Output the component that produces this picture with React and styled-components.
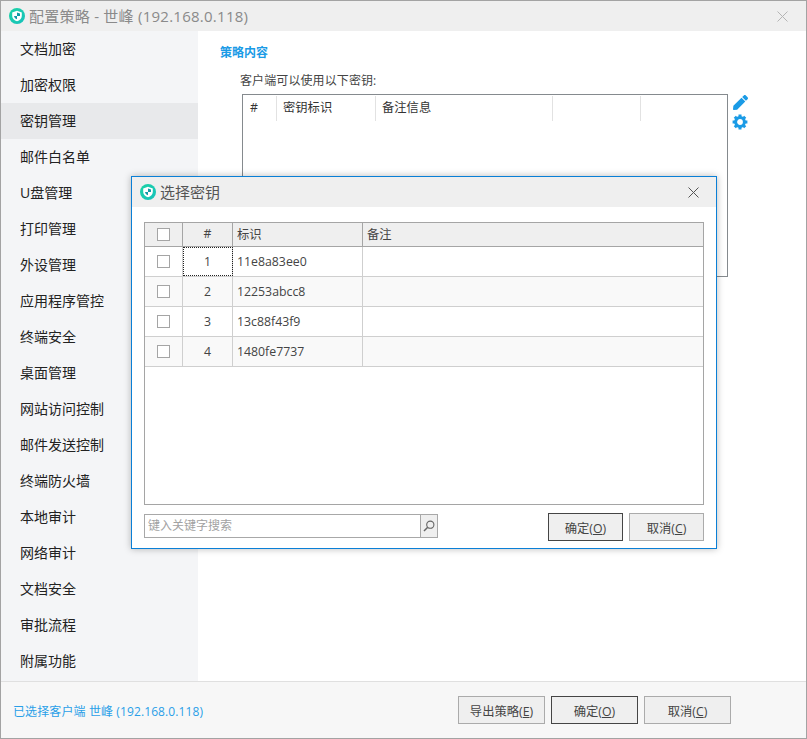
import React from "react";
import styled, { createGlobalStyle } from "styled-components";
import { FaPen } from "react-icons/fa";

const Global = createGlobalStyle`
  html, body { margin: 0; padding: 0; background: #fff; }
  * { box-sizing: border-box; }
  body { font-family: "Open Sans", "Noto Sans CJK SC", sans-serif; font-size: 13px; color: #333; }
`;

const Win = styled.div`
  position: relative; width: 807px; height: 739px; border: 1px solid #a3a3a3;
  display: flex; flex-direction: column; background: #fff; overflow: hidden;
`;
const TitleBar = styled.div`
  height: 30px; flex: none; background: #efefef; display: flex; align-items: center;
  padding: 0 ${p => p.$pr}px 0 8px; gap: 4px; font-size: 15px; letter-spacing: ${p => p.$ls}px; color: ${p => p.$c};
`;
const TitleText = styled.span`flex: 1; white-space: nowrap; line-height: 20px; padding-bottom: 1px;`;
const Body = styled.div`flex: 1; display: flex; min-height: 0;`;
const Sidebar = styled.div`width: 197px; flex: none; background: #f4f5f7; display: flex; flex-direction: column;`;
const NavItem = styled.div`
  height: 36px; flex: none; padding: 0 0 2px 19px; display: flex; align-items: center; font-size: 14px; color: #222;
  background: ${p => (p.$active ? "#e8e9eb" : "transparent")};
`;
const Content = styled.div`flex: 1; padding: 13px 0 0 22px; display: flex; flex-direction: column; align-items: flex-start;`;
const Heading = styled.div`font-size: 12px; font-weight: 700; color: #1a9be6; line-height: 18px;`;
const Label = styled.div`margin: 10px 0 0 20px; font-size: 12px; letter-spacing: .1px; color: #444; line-height: 18px;`;
const KeyRow = styled.div`display: flex; margin: 4px 0 0 22px; gap: 4px;`;
const KeyBox = styled.div`width: 486px; height: 183px; border: 1px solid #858a8e;`;
const KeyHead = styled.div`display: grid; grid-template-columns: 34px 99px 177px 88px; height: 25px; margin-top: 1px;`;
const KeyHeadCell = styled.div`
  border-right: 1px solid #e2e2e2; padding-left: ${p => p.$pl}px; font-size: 12.3px; color: #333; line-height: 24px;
`;
const Tools = styled.div`display: flex; flex-direction: column; gap: 4px; color: #1a9be6; padding-top: 1px; svg { display: block; }`;
const PenWrap = styled.div`padding-left: 1px;`;

const Footer = styled.div`
  height: 57px; flex: none; border-top: 1px solid #e0e0e0; background: #f7f7f7;
  display: flex; align-items: center; padding: 0 75px 0 12px; gap: 6px;
`;
const Selected = styled.div`flex: 1; color: #2a9fe8; font-size: 12px; letter-spacing: .11px; padding-top: 1px;`;
const Btn = styled.button`
  width: ${p => p.$w}px; height: 28px; flex: none; border: 1px solid ${p => (p.$primary ? "#454545" : "#ababab")};
  background: #efefef; color: #444; font: 12.3px "Open Sans", "Noto Sans CJK SC", sans-serif; padding: 1px 0 0;
  u { text-decoration: underline; }
`;

const Dialog = styled.div`
  position: absolute; left: 130px; top: 175px; width: 586px; height: 373px; background: #fff;
  border: 1px solid #0a7fd6; box-shadow: 0 0 7px rgba(0,0,0,.28); display: flex; flex-direction: column;
`;
const Close = styled.svg`flex: none; display: block;`;
const DialogBody = styled.div`flex: 1; padding: 15px 12px 0 12px; display: flex; flex-direction: column;`;
const Table = styled.div`height: 283px; flex: none; border: 1px solid #a5a5a5; display: flex; flex-direction: column;`;
const Row = styled.div`
  display: grid; grid-template-columns: 38px 50px 130px 1fr; flex: none; height: ${p => p.$h}px;
  border-bottom: 1px solid ${p => (p.$head ? "#a5a5a5" : "#cfcfcf")};
  background: ${p => (p.$head ? "#efefef" : p.$alt ? "#f9f9f9" : "#fff")};
`;
const Cell = styled.div`
  border-right: 1px solid ${p => (p.$head ? "#a5a5a5" : "#cfcfcf")}; display: flex; align-items: center;
  justify-content: ${p => (p.$center ? "center" : "flex-start")};
  padding: 0 0 ${p => (p.$box ? 0 : p.$head ? 2 : 1)}px ${p => (p.$center ? 0 : 4)}px; font-size: 12.3px; color: #444;
  &:last-child { border-right: 0; }
  outline: ${p => (p.$focus ? "1px dotted #222" : "none")}; outline-offset: -1px;
`;
const Check = styled.span`width: 13px; height: 13px; border: 1px solid #a5a5a5; background: #fff; display: block;`;
const Bottom = styled.div`display: flex; align-items: center; margin-top: 8px; gap: 6px;`;
const SearchBox = styled.div`
  width: 294px; height: 24px; flex: none; border: 1px solid #a8a8a8; display: flex; margin: 0 104px 2px 0; background: #fff;
`;
const SearchInput = styled.div`flex: 1; padding-left: 3px; font-size: 12px; color: #a2a2a2; line-height: 22px;`;
const SearchBtn = styled.div`
  width: 17px; border-left: 1px solid #a8a8a8; background: #efefef; display: flex; align-items: center; justify-content: center;
`;

const Logo = () => (
  <svg width="16" height="16" viewBox="0 0 16 16" style={{ flex: "none" }}>
    <defs>
      <linearGradient id="lg" x1="0" y1="0" x2="1" y2="1">
        <stop offset="0" stopColor="#1bd3a4" />
        <stop offset="1" stopColor="#17c1bd" />
      </linearGradient>
    </defs>
    <circle cx="8" cy="8" r="8" fill="url(#lg)" />
    <path d="M8 2.8 12.8 4.4V8c0 2.6-2 4.3-4.8 5.3C5.2 12.3 3.2 10.6 3.2 8V4.4Z" fill="#fff" />
    <path d="M8 4.6 11 5.6V8H8ZM8 8H5c.2 1.5 1.3 2.6 3 3.3Z" fill="#129aa6" />
  </svg>
);
const Gear = () => (
  <svg width="16" height="16" viewBox="0 0 16 16">
    <circle cx="8" cy="8" r="4.4" fill="none" stroke="currentColor" strokeWidth="3" />
    <g stroke="currentColor" strokeWidth="3">
      <path d="M8 .6v2.4M8 13v2.4M.6 8H3M13 8h2.4M2.8 2.8l1.7 1.7M11.5 11.5l1.7 1.7M13.2 2.8l-1.7 1.7M4.5 11.5l-1.7 1.7" />
    </g>
  </svg>
);
const X = ({ c, s }) => (
  <Close width={s} height={s} viewBox="0 0 11 11">
    <path d="M.5.5l10 10M10.5.5l-10 10" stroke={c} strokeWidth="1" fill="none" />
  </Close>
);

const nav = ["文档加密","加密权限","密钥管理","邮件白名单","U盘管理","打印管理","外设管理","应用程序管控","终端安全","桌面管理","网站访问控制","邮件发送控制","终端防火墙","本地审计","网络审计","文档安全","审批流程","附属功能"];
const keys = ["11e8a83ee0","12253abcc8","13c88f43f9","1480fe7737"];

export default function App() {
  return (
    <Win>
      <Global />
      <TitleBar $pr={18} $ls={0.25} $c="#8a8a8a">
        <Logo />
        <TitleText>配置策略 - 世峰 (192.168.0.118)</TitleText>
        <X c="#b5b5b5" s={11} />
      </TitleBar>
      <Body>
        <Sidebar>
          {nav.map((n, i) => <NavItem key={n} $active={i === 2}>{n}</NavItem>)}
        </Sidebar>
        <Content>
          <Heading>策略内容</Heading>
          <Label>客户端可以使用以下密钥:</Label>
          <KeyRow>
            <KeyBox>
              <KeyHead>
                <KeyHeadCell $pl={7}>#</KeyHeadCell>
                <KeyHeadCell $pl={6}>密钥标识</KeyHeadCell>
                <KeyHeadCell $pl={6}>备注信息</KeyHeadCell>
                <KeyHeadCell $pl={0} />
              </KeyHead>
            </KeyBox>
            <Tools>
              <PenWrap><FaPen size={15} /></PenWrap>
              <Gear />
            </Tools>
          </KeyRow>
        </Content>
      </Body>
      <Footer>
        <Selected>已选择客户端 世峰 (192.168.0.118)</Selected>
        <Btn $w={87}>导出策略(<u>E</u>)</Btn>
        <Btn $w={87} $primary>确定(<u>O</u>)</Btn>
        <Btn $w={87}>取消(<u>C</u>)</Btn>
      </Footer>
      <Dialog>
        <TitleBar $pr={17} $ls={0} $c="#555">
          <Logo />
          <TitleText>选择密钥</TitleText>
          <X c="#555" s={11} />
        </TitleBar>
        <DialogBody>
          <Table>
            <Row $head $h={24}>
              <Cell $head $center $box><Check /></Cell>
              <Cell $head $center>#</Cell>
              <Cell $head>标识</Cell>
              <Cell $head>备注</Cell>
            </Row>
            {keys.map((k, i) => (
              <Row key={k} $h={30} $alt={i % 2 === 1}>
                <Cell $center $box><Check /></Cell>
                <Cell $center $focus={i === 0}>{i + 1}</Cell>
                <Cell>{k}</Cell>
                <Cell />
              </Row>
            ))}
          </Table>
          <Bottom>
            <SearchBox>
              <SearchInput>键入关键字搜索</SearchInput>
              <SearchBtn>
                <svg width="12" height="12" viewBox="0 0 12 12">
                  <circle cx="7.3" cy="4.7" r="3.6" fill="none" stroke="#666" strokeWidth="1.1" />
                  <path d="M4.7 7.3 1 11" stroke="#666" strokeWidth="1.5" />
                </svg>
              </SearchBtn>
            </SearchBox>
            <Btn $w={75} $primary>确定(<u>O</u>)</Btn>
            <Btn $w={75}>取消(<u>C</u>)</Btn>
          </Bottom>
        </DialogBody>
      </Dialog>
    </Win>
  );
}
